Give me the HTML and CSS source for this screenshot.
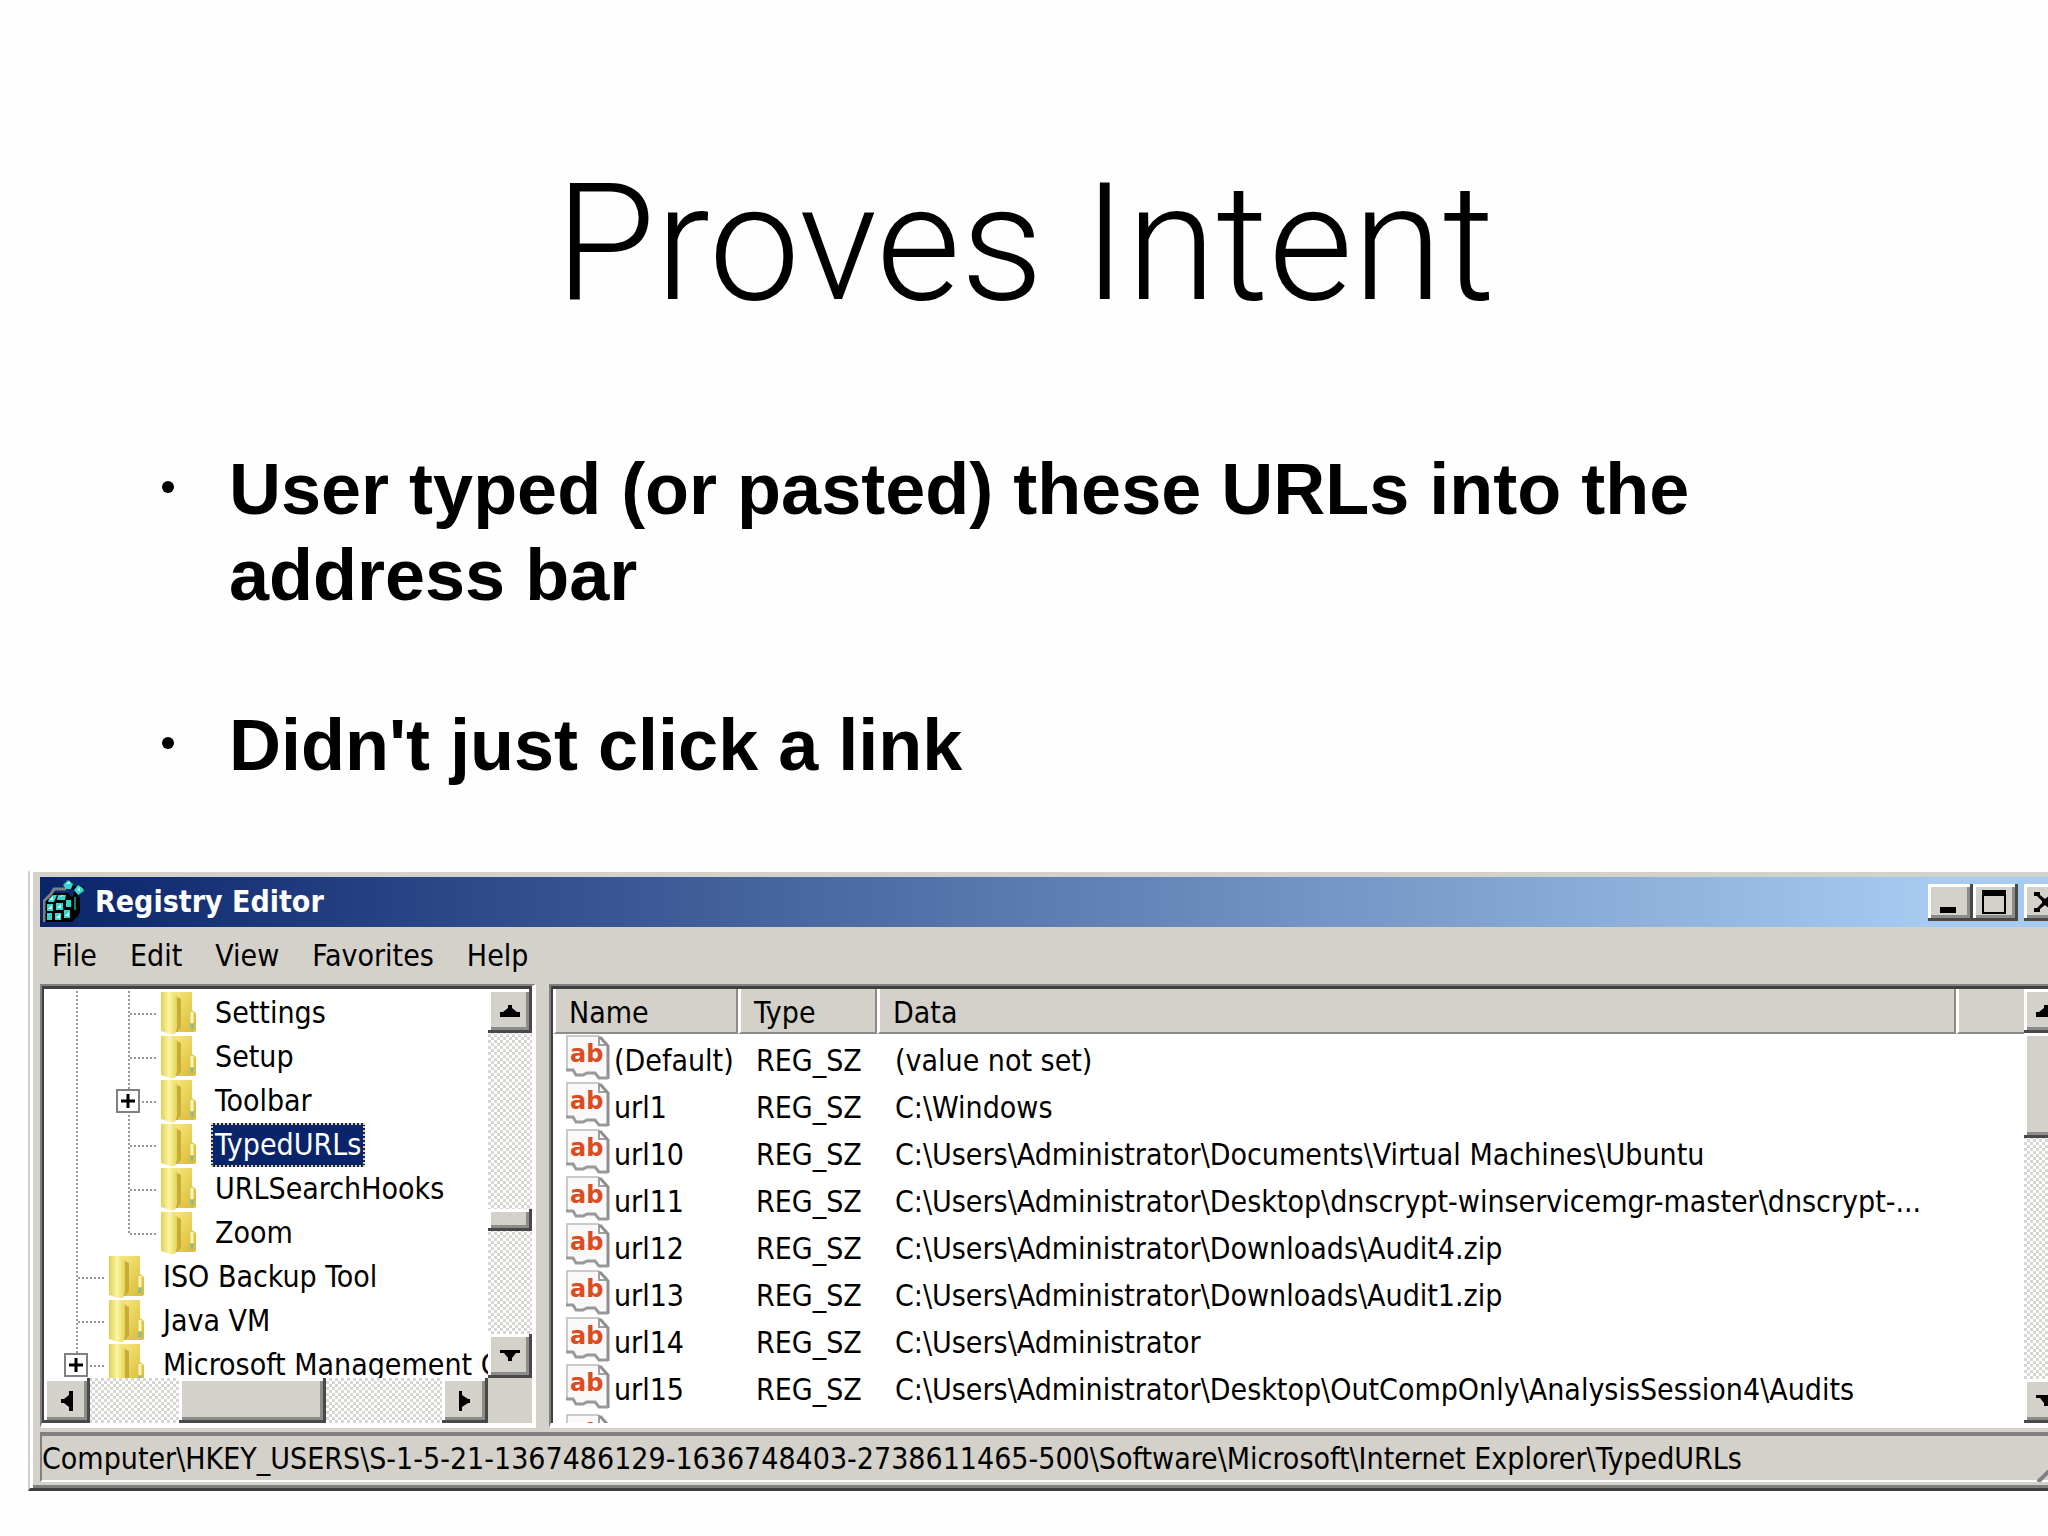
FILE: index.html
```html
<!DOCTYPE html>
<html lang="en">
<head>
  <meta charset="UTF-8">
  <meta name="viewport" content="width=device-width, initial-scale=1.0">
  <title>Proves Intent</title>
  <link rel="stylesheet" href="styles.css">
</head>
<body>
  <!-- shared icons -->
  <svg class="sprites" aria-hidden="true">
    <defs>
      <linearGradient id="flap" x1="0" x2="1">
        <stop offset="0" stop-color="#e3cf55"/>
        <stop offset="0.5" stop-color="#fbf6a4"/>
        <stop offset="1" stop-color="#e6d458"/>
      </linearGradient>
      <linearGradient id="back" x1="0" y1="0" x2="1" y2="1">
        <stop offset="0" stop-color="#f8eb83"/>
        <stop offset="1" stop-color="#d8b932"/>
      </linearGradient>
      <symbol id="folder" viewBox="0 0 36 42">
        <path d="M10 0h21v18l4 3v18l-2 1H16z" fill="url(#back)"/>
        <path d="M14 4l6 3v29l-4 4h-3z" fill="#c9ab38"/>
        <path d="M0 0h12l4 5v31l-2 6H9L0 39z" fill="url(#flap)"/>
        <path d="M31 20v11" stroke="#fdf6c0" stroke-width="3"/>
        <path d="M31 32v5" stroke="#7dbcae" stroke-width="3"/>
      </symbol>
      <symbol id="string" viewBox="0 0 44 46">
        <path d="M1 1h32l9 11v31l-6-3-7 1-5 3-5-2-5 1-6-6-7-1z" fill="#faf9f8"/>
        <path d="M1 36V1h32" fill="none" stroke="#c9c9c9" stroke-width="2"/>
        <path d="M33 1v9h8" fill="#fff" stroke="#a0a0a0" stroke-width="2"/>
        <path d="M34 2l8 9v33" fill="none" stroke="#8f8f8f" stroke-width="3"/>
        <path d="M0 35h7l3 5h7l4-2h8l4 5h9" fill="none" stroke="#999" stroke-width="3"/>
        <text x="4" y="27" class="ab">ab</text>
      </symbol>
      <symbol id="up" viewBox="0 0 20 12"><path d="M8 0h4v3l5 4h3v5H0V7h3l5-4z"/></symbol>
      <symbol id="down" viewBox="0 0 20 12"><path d="M0 0h20v3h-4l-4 5v3H8V8L4 3H0z"/></symbol>
      <symbol id="left" viewBox="0 0 12 20"><path d="M12 0v20H8v-4l-5-4H0V8h3l5-4V0z"/></symbol>
      <symbol id="right" viewBox="0 0 12 20"><path d="M0 0v20h3v-4l6-4h2V8H9L3 4V0z"/></symbol>
      <symbol id="plus" viewBox="0 0 20 20"><path d="M3 10h14M10 3v14" stroke="#000" stroke-width="3"/></symbol>
    </defs>
  </svg>

  <main class="slide">
    <h1>Proves Intent</h1>
    <ul class="points">
      <li>User typed (or pasted) these URLs into the address bar</li>
      <li>Didn't just click a link</li>
    </ul>

    <section class="window">
      <header class="titlebar">
        <svg class="app-icon" viewBox="0 0 44 44" aria-hidden="true">
          <path d="M1 22l8-9h16l4 4 4-4 3 4v18l-7 7H1z" fill="#000"/>
          <path d="M1 42V21l7-7 3-5h12" fill="none" stroke="#7b7f86" stroke-width="3"/>
          <path d="M24 5l9 4 8-1M33 12v8M35 17v16" fill="none" stroke="#000" stroke-width="4"/>
          <g fill="#35d6cc">
            <path d="M6 19l4-4h4l-3 7H5zM15 15h8l-1 5h-8zM4 24h6v7H4zM13 23h7v7h-7zM23 20h5v7h-5zM4 33h5v7H4zM12 33h6v7h-6zM21 30h6v8h-6z"/>
            <path d="M20 5l5-5 5 4-2 5h-5zM31 10l4-5 5 3 1 3-6 4z"/>
          </g>
          <path d="M6 20l4-4v4zM15 18l4-3h2zM5 29l4-4v4zM14 28l4-4v4zM13 38l4-4v4zM22 36l4-4v4zM23 4l4-3v3zM34 10l3-3v4z" fill="#d5fffb"/>
          <path d="M32 17v13" stroke="#138079" stroke-width="2"/>
        </svg>
        <h2>Registry Editor</h2>
        <div class="controls">
          <button class="raised" aria-label="Minimize"><svg width="44" height="36"><path d="M11 23h16v6H11z"/></svg></button>
          <button class="raised" aria-label="Maximize"><svg width="44" height="36"><path d="M8 6h24v24H8zM10 12v16h20V12z" fill-rule="evenodd"/></svg></button>
          <button class="raised close" aria-label="Close"><svg width="44" height="36"><path d="M9 8h6v3l5 4 5-4V8h6v4h-3l-5 5v2l5 5h3v4h-6v-3l-5-4-5 4v3H9v-4h3l5-5v-2l-5-5H9z"/></svg></button>
        </div>
      </header>

      <nav class="menu">
        <button>File</button>
        <button>Edit</button>
        <button>View</button>
        <button>Favorites</button>
        <button>Help</button>
      </nav>

      <div class="panes">
        <div class="pane tree-pane">
          <div class="inner">
            <ul class="tree">
              <li><span class="guide"></span><span class="branch"></span><svg class="folder"><use href="#folder"/></svg><span class="label">Settings</span></li>
              <li><span class="guide"></span><span class="branch"></span><svg class="folder"><use href="#folder"/></svg><span class="label">Setup</span></li>
              <li><span class="guide"></span><span class="branch"><button class="expand" aria-label="Expand Toolbar"><svg><use href="#plus"/></svg></button></span><svg class="folder"><use href="#folder"/></svg><span class="label">Toolbar</span></li>
              <li><span class="guide"></span><span class="branch"></span><svg class="folder"><use href="#folder"/></svg><span class="label selected">TypedURLs</span></li>
              <li><span class="guide"></span><span class="branch"></span><svg class="folder"><use href="#folder"/></svg><span class="label">URLSearchHooks</span></li>
              <li><span class="guide"></span><span class="branch last"></span><svg class="folder"><use href="#folder"/></svg><span class="label">Zoom</span></li>
              <li><span class="branch"></span><svg class="folder"><use href="#folder"/></svg><span class="label">ISO Backup Tool</span></li>
              <li><span class="branch"></span><svg class="folder"><use href="#folder"/></svg><span class="label">Java VM</span></li>
              <li><span class="branch"><button class="expand" aria-label="Expand Microsoft Management"><svg><use href="#plus"/></svg></button></span><svg class="folder"><use href="#folder"/></svg><span class="label">Microsoft Management C</span></li>
            </ul>
            <div class="vscroll">
              <button class="raised" aria-label="Scroll up"><svg class="arrow-v"><use href="#up"/></svg></button>
              <div class="space-large"></div>
              <div class="thumb raised"></div>
              <div class="space-small"></div>
              <button class="raised" aria-label="Scroll down"><svg class="arrow-v"><use href="#down"/></svg></button>
            </div>
            <div class="hscroll">
              <button class="raised" aria-label="Scroll left"><svg class="arrow-h"><use href="#left"/></svg></button>
              <div class="space-small"></div>
              <div class="thumb raised"></div>
              <div class="space-large"></div>
              <button class="raised" aria-label="Scroll right"><svg class="arrow-h"><use href="#right"/></svg></button>
            </div>
          </div>
        </div>

        <div class="pane list-pane">
          <div class="inner">
            <div class="list">
              <table>
                <colgroup><col class="col-name"><col class="col-type"><col><col class="col-rest"></colgroup>
                <thead>
                  <tr><th>Name</th><th>Type</th><th>Data</th><th></th></tr>
                </thead>
                <tbody>
                  <tr><td><svg class="string"><use href="#string"/></svg>(Default)</td><td>REG_SZ</td><td>(value not set)</td><td></td></tr>
                  <tr><td><svg class="string"><use href="#string"/></svg>url1</td><td>REG_SZ</td><td>C:\Windows</td><td></td></tr>
                  <tr><td><svg class="string"><use href="#string"/></svg>url10</td><td>REG_SZ</td><td>C:\Users\Administrator\Documents\Virtual Machines\Ubuntu</td><td></td></tr>
                  <tr><td><svg class="string"><use href="#string"/></svg>url11</td><td>REG_SZ</td><td>C:\Users\Administrator\Desktop\dnscrypt-winservicemgr-master\dnscrypt-...</td><td></td></tr>
                  <tr><td><svg class="string"><use href="#string"/></svg>url12</td><td>REG_SZ</td><td>C:\Users\Administrator\Downloads\Audit4.zip</td><td></td></tr>
                  <tr><td><svg class="string"><use href="#string"/></svg>url13</td><td>REG_SZ</td><td>C:\Users\Administrator\Downloads\Audit1.zip</td><td></td></tr>
                  <tr><td><svg class="string"><use href="#string"/></svg>url14</td><td>REG_SZ</td><td>C:\Users\Administrator</td><td></td></tr>
                  <tr><td><svg class="string"><use href="#string"/></svg>url15</td><td>REG_SZ</td><td>C:\Users\Administrator\Desktop\OutCompOnly\AnalysisSession4\Audits</td><td></td></tr>
                  <tr><td><svg class="string"><use href="#string"/></svg></td><td></td><td></td><td></td></tr>
                </tbody>
              </table>
            </div>
            <div class="vscroll">
              <button class="raised" aria-label="Scroll up"><svg class="arrow-v"><use href="#up"/></svg></button>
              <div class="thumb raised"></div>
              <div class="space-large"></div>
              <button class="raised" aria-label="Scroll down"><svg class="arrow-v"><use href="#down"/></svg></button>
            </div>
          </div>
        </div>
      </div>

      <footer class="status">
        <span>Computer\HKEY_USERS\S-1-5-21-1367486129-1636748403-2738611465-500\Software\Microsoft\Internet Explorer\TypedURLs</span>
        <svg class="grip" viewBox="0 0 36 36" aria-hidden="true"><path d="M2 36L36 2M14 36l22-22M26 36l10-10" stroke="#808080" stroke-width="4"/></svg>
      </footer>
    </section>
  </main>
</body>
</html>
```

FILE: styles.css
```css
* {
  box-sizing: border-box;
}
body {
  margin: 0;
  background: #fefefe;
  color: #000;
  overflow: hidden;
}
button {
  padding: 0;
  border: 0;
  background: none;
  font: inherit;
  color: inherit;
}
svg {
  display: block;
  flex: none;
}
.sprites {
  position: absolute;
  width: 0;
  height: 0;
}
.slide {
  padding: 144px 0 42px 28px;
}
h1 {
  margin: 0 26px 102px 0;
  font: 300 163px/200px Roboto, "Liberation Sans", sans-serif;
  text-align: center;
}

/* bullet points */
.points {
  display: flex;
  flex-direction: column;
  gap: 84px;
  margin: 0 300px 82px 134px;
  padding: 0;
  list-style: none;
  font: bold 72px/86px "Liberation Sans", Arial, sans-serif;
}
.points li {
  display: flex;
  gap: 55px;
}
.points li::before {
  content: "";
  flex: none;
  width: 12px;
  height: 12px;
  margin-top: 35px;
  border-radius: 50%;
  background: #000;
}

/* window frame, runs off the right side of the slide */
.window {
  margin-right: -38px;
  padding: 5px 12px 6px 10px;
  border-style: solid;
  border-width: 2px 2px 3px;
  border-color: #fff #404040 #404040 #d4d0c8;
  box-shadow: inset 3px 0 #fff, inset 0 -3px #808080;
  background: #d3d1ca;
  font: 30px/40px "DejaVu Sans Condensed", Tahoma, sans-serif;
}
.raised {
  display: flex;
  align-items: center;
  justify-content: center;
  background: #d3d1ca;
  box-shadow: inset -3px -3px #484848, inset 3px 3px #fff, inset -6px -6px #8c8c88;
}
.titlebar {
  display: flex;
  align-items: center;
  height: 50px;
  padding: 0 3px 0 3px;
  background: linear-gradient(90deg, #0a246a, #a6caf0 93%);
  color: #fff;
}
.app-icon {
  width: 44px;
  height: 44px;
}
h2 {
  flex: 1;
  margin: 0 0 0 8px;
  font-size: 30px;
  line-height: 40px;
}
.controls {
  display: flex;
}
.controls button {
  width: 45px;
  height: 37px;
}
.controls .close {
  margin-left: 6px;
}
.menu {
  display: flex;
  gap: 33px;
  height: 57px;
  padding: 9px 12px 8px;
}

/* panes */
.panes {
  display: flex;
  gap: 13px;
  height: 444px;
  margin-bottom: 4px;
}
.pane {
  border-style: solid;
  border-width: 2px 4px 5px 2px;
  border-color: #808080 #fff #fff #808080;
}
.inner {
  height: 100%;
  border-top: 3px solid #404040;
  border-left: 2px solid #404040;
  background: #fff;
}
.tree-pane {
  flex: 0 0 496px;
}
.tree-pane .inner {
  display: grid;
  grid-template: 389px 45px / 1fr 44px;
  background: #d3d1ca;
}
.list-pane {
  flex: 1;
  min-width: 0;
}
.list-pane .inner {
  display: flex;
}

/* key tree */
.tree {
  margin: 0;
  padding: 2px 0 0 6px;
  list-style: none;
  overflow: hidden;
  background: #fff;
}
.tree li {
  display: flex;
  align-items: center;
  height: 44px;
  white-space: nowrap;
}
.guide,
.branch {
  flex: none;
  height: 44px;
  background: repeating-linear-gradient(#999 0 2px, transparent 2px 4px) 26px 0 / 2px 100% no-repeat;
}
.guide {
  width: 52px;
}
.branch {
  display: flex;
  align-items: center;
  width: 56px;
  padding-left: 14px;
  background:
    repeating-linear-gradient(#999 0 2px, transparent 2px 4px) 26px 0 / 2px 100% no-repeat,
    repeating-linear-gradient(90deg, #999 0 2px, transparent 2px 4px) 28px 22px / 28px 2px no-repeat;
}
.branch.last {
  background-size: 2px 24px, 28px 2px;
}
.expand {
  width: 24px;
  height: 24px;
  border: 2px solid #808080;
  background: #fff;
}
.expand svg {
  width: 20px;
  height: 20px;
}
.folder {
  width: 36px;
  height: 42px;
  margin: 0 14px 0 3px;
}
.label {
  padding: 0 4px;
  line-height: 44px;
}
.selected {
  outline: 2px dotted #e8d48c;
  outline-offset: -2px;
  background: #0a246a;
  color: #fff;
}

/* scroll bars */
.vscroll,
.hscroll {
  display: flex;
  background: repeating-conic-gradient(#d8d6d2 0 25%, #fff 0 50%) 0 0 / 6px 6px;
}
.vscroll {
  flex: none;
  flex-direction: column;
  width: 44px;
}
.vscroll button {
  height: 44px;
}
.hscroll button {
  width: 46px;
}
.arrow-v {
  width: 20px;
  height: 12px;
}
.arrow-h {
  width: 12px;
  height: 20px;
}
.tree-pane .vscroll .thumb {
  height: 22px;
}
.tree-pane .vscroll .space-large {
  flex: 176;
}
.tree-pane .vscroll .space-small {
  flex: 103;
}
.hscroll .thumb {
  width: 147px;
}
.hscroll .space-small {
  flex: 89;
}
.hscroll .space-large {
  flex: 117;
}
.list-pane .thumb {
  height: 105px;
}
.list-pane .space-large {
  flex: 1;
}

/* value list */
.list {
  flex: 1;
  min-width: 0;
  overflow: hidden;
}
table {
  width: 100%;
  table-layout: fixed;
  border-collapse: separate;
  border-spacing: 0;
}
.col-name {
  width: 185px;
}
.col-type {
  width: 139px;
}
.col-rest {
  width: 68px;
}
th {
  height: 45px;
  padding: 5px 0 0 13px;
  border-style: solid;
  border-width: 0 2px 2px 3px;
  border-color: #fff #8c8c88 #8c8c88 #fff;
  background: #d3d1ca;
  font-weight: normal;
  line-height: 38px;
  text-align: left;
}
th:last-child {
  border-right: 0;
}
td {
  height: 47px;
  padding: 7px 0 0 18px;
  line-height: 40px;
  white-space: nowrap;
}
td:first-child {
  padding-left: 13px;
}
.string {
  float: left;
  width: 44px;
  height: 46px;
  margin: -6px 4px -6px 0;
}
.ab {
  font: bold 24px "DejaVu Sans", sans-serif;
  fill: #dc4c20;
}

/* status bar */
.status {
  display: flex;
  justify-content: space-between;
  height: 50px;
  border-style: solid;
  border-width: 4px 0 2px 2px;
  border-color: #808080 #fff #fff #808080;
  line-height: 46px;
  white-space: nowrap;
}
.grip {
  width: 36px;
  height: 36px;
  margin-top: 10px;
}
```
